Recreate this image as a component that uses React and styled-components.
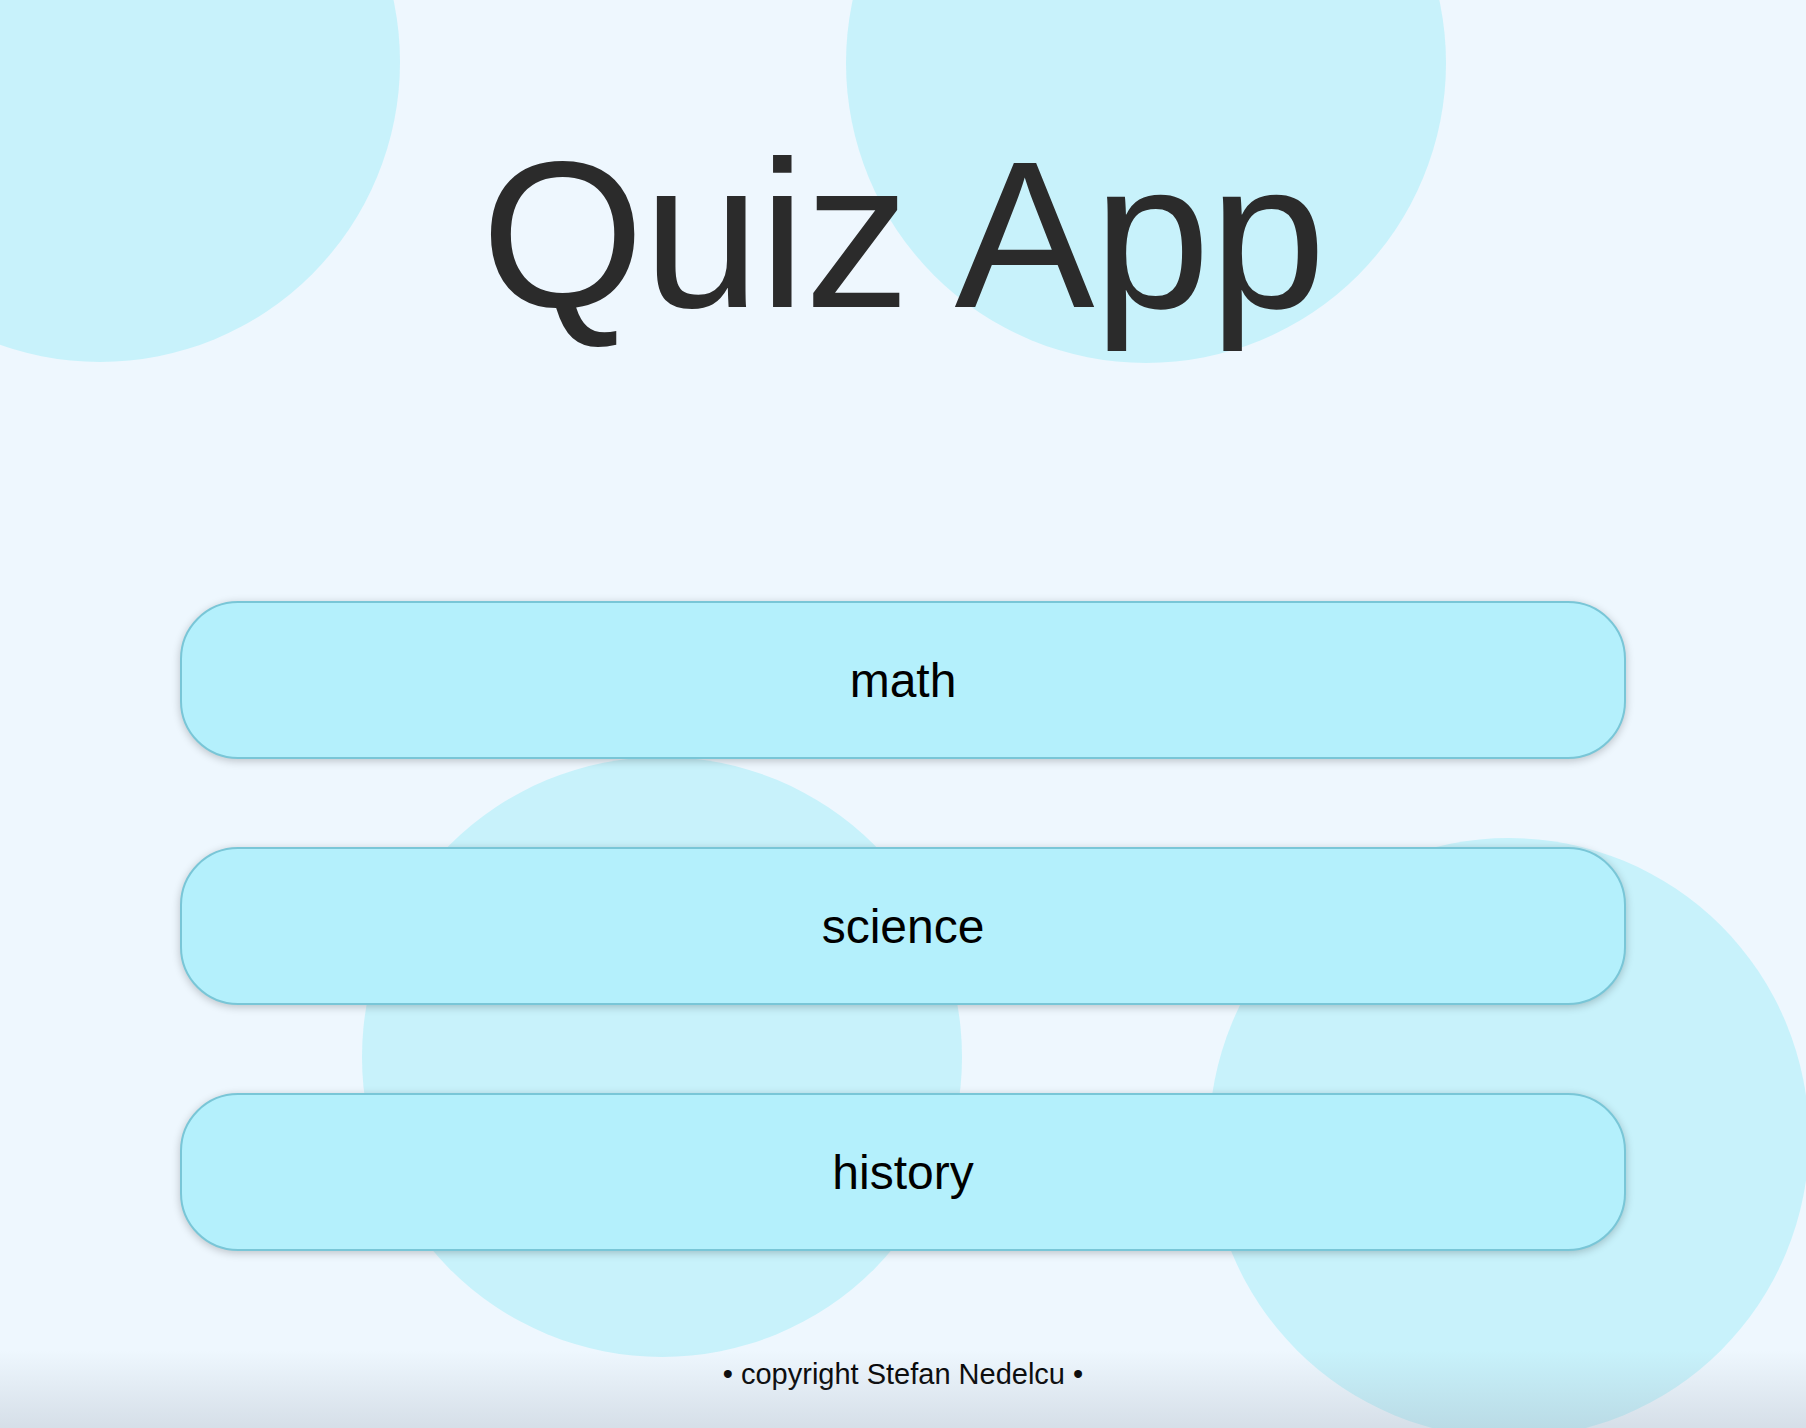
import styled, { createGlobalStyle } from "styled-components";

const GlobalStyle = createGlobalStyle`
  html, body {
    margin: 0;
    padding: 0;
  }
  body {
    background: #eef7fe;
    font-family: "Liberation Sans", Arial, sans-serif;
  }
`;

const bubbles = [
  { x: 100, y: 62 },
  { x: 1146, y: 63 },
  { x: 662, y: 1057 },
  { x: 1509, y: 1138 },
];

const categories = ["math", "science", "history"];

function App() {
  return (
    <>
      <GlobalStyle />
      <Page>
        {bubbles.map((b, i) => (
          <Bubble key={i} style={{ left: b.x - 300, top: b.y - 300 }} />
        ))}
        <Title>Quiz App</Title>
        <Menu>
          {categories.map((c) => (
            <CategoryButton key={c}>{c}</CategoryButton>
          ))}
        </Menu>
        <Footer>• copyright Stefan Nedelcu •</Footer>
        <BottomFade />
      </Page>
    </>
  );
}

const Page = styled.div`
  position: relative;
  min-height: 100vh;
  overflow: hidden;
  display: flex;
  flex-direction: column;
  align-items: center;
  background: #eef7fe;
`;

const Bubble = styled.div`
  position: absolute;
  width: 600px;
  height: 600px;
  border-radius: 50%;
  background: #c8f2fb;
  z-index: 0;
`;

const Title = styled.h1`
  position: relative;
  z-index: 1;
  margin: 0;
  padding-top: 130px;
  font-size: 210px;
  font-weight: 400;
  line-height: 1;
  color: #2b2b2b;
  letter-spacing: -1px;
`;

const Menu = styled.div`
  position: relative;
  z-index: 1;
  width: 1446px;
  margin-top: 261px;
  display: flex;
  flex-direction: column;
  gap: 88px;
`;

const CategoryButton = styled.button`
  height: 158px;
  width: 100%;
  border: 2px solid #79c6d7;
  border-radius: 58px;
  background: #b4f0fc;
  box-shadow: 0 2px 8px rgba(0, 0, 0, 0.22);
  font-family: "Liberation Sans", Arial, sans-serif;
  font-size: 48px;
  color: #000;
  cursor: pointer;
`;

const Footer = styled.footer`
  position: relative;
  z-index: 1;
  margin-top: 107px;
  font-size: 29px;
  color: #000;
`;

const BottomFade = styled.div`
  position: absolute;
  left: 0;
  right: 0;
  bottom: 0;
  height: 78px;
  z-index: 2;
  pointer-events: none;
  background: linear-gradient(rgba(150, 160, 175, 0), rgba(150, 160, 175, 0.28));
`;

export default App;
